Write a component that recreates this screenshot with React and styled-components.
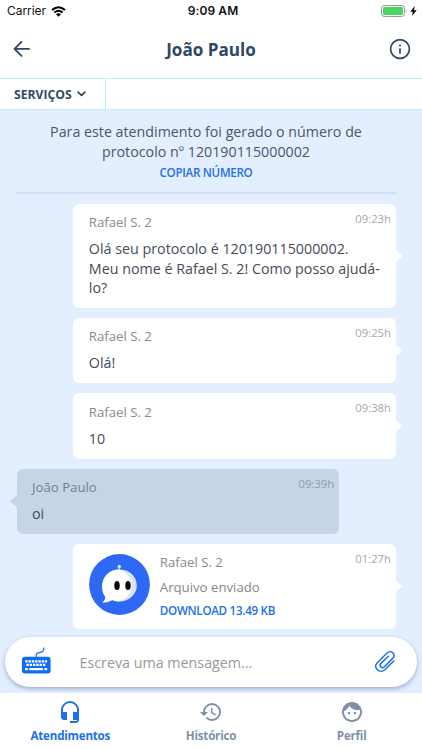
import React from "react";
import styled, { createGlobalStyle } from "styled-components";
import { MdHeadsetMic, MdHistory, MdFace } from "react-icons/md";

const GlobalStyle = createGlobalStyle`
  * { box-sizing: border-box; }
  body { margin: 0; font-family: "Open Sans", "Noto Sans", sans-serif; background: #fff; }
  button { border: 0; padding: 0; background: none; font: inherit; color: inherit; text-align: inherit; }
  svg { display: block; flex: none; }
`;

const Screen = styled.div`
  width: 422px;
  height: 750px;
  display: flex;
  flex-direction: column;
  overflow: hidden;
  background: #fff;
`;

const StatusBar = styled.div`
  height: 22px;
  display: grid;
  grid-template-columns: 1fr auto 1fr;
  align-items: center;
  padding: 0 5px 0 7px;
  font-family: Inter, sans-serif;
  font-size: 12px;
  line-height: 22px;
  color: #111;
`;

const Carrier = styled.div`
  display: flex;
  align-items: center;
  gap: 5.5px;
  letter-spacing: -0.05px;
`;

const Clock = styled.div`
  font-weight: 600;
  letter-spacing: 0.1px;
  transform: translateX(1px);
`;

const Power = styled.div`
  display: flex;
  justify-content: flex-end;
  align-items: center;
  gap: 3px;
`;

const Header = styled.header`
  height: 56px;
  display: grid;
  grid-template-columns: 40px 1fr 40px;
  align-items: center;
  padding: 0 10px;
  color: #2f4767;
`;

const Title = styled.h1`
  margin: 0;
  text-align: center;
  font-size: 17.1px;
  line-height: 24px;
  font-weight: 700;
`;

const IconButton = styled.button`
  display: flex;
  justify-content: ${(p) => (p.$end ? "flex-end" : "flex-start")};
`;

const ServiceBar = styled.div`
  height: 32px;
  flex: none;
  display: flex;
  border-top: 1px solid #c3eef8;
  border-bottom: 1px solid #c9ebf7;
`;

const ServiceMenu = styled.button`
  width: 106px;
  display: flex;
  align-items: center;
  gap: 5px;
  padding-left: 14px;
  border-right: 1px solid #b5eefa;
  color: #33486a;
  font-size: 12.2px;
  font-weight: 700;
`;

const Chat = styled.main`
  flex: 1;
  min-height: 0;
  display: flex;
  flex-direction: column;
  background: #e3efff;
`;

const Protocol = styled.section`
  margin: 0 26px 0 16px;
  height: 84px;
  padding-top: 12px;
  border-bottom: 2px solid #d0dff3;
  text-align: center;
`;

const ProtocolText = styled.p`
  margin: 0;
  font-size: 14.26px;
  line-height: 19.5px;
  color: #4b5669;
`;

const LinkButton = styled.button`
  display: block;
  font-size: 11.6px;
  letter-spacing: -0.28px;
  line-height: 16px;
  font-weight: 600;
  color: #1e70e6;
`;

const CopyButton = styled(LinkButton)`
  margin: 4px auto 0;
`;

const Messages = styled.div`
  display: flex;
  flex-direction: column;
  gap: 10px;
  padding: 10px 26px 0 16.5px;
`;

const Bubble = styled.article`
  position: relative;
  width: 322.7px;
  height: ${(p) => p.$height}px;
  align-self: ${(p) => (p.$own ? "flex-start" : "flex-end")};
  display: flex;
  gap: 10px;
  padding: 8.4px 10px 0 15.5px;
  border-radius: 6px;
  background: ${(p) => (p.$own ? "#c6d5e6" : "#fff")};

  &::after {
    content: "";
    position: absolute;
    top: 50%;
    ${(p) => (p.$own ? "left" : "right")}: -6.5px;
    width: 7px;
    height: 12px;
    transform: translateY(-50%);
    background: inherit;
    clip-path: ${(p) =>
      p.$own ? "polygon(100% 0, 0 50%, 100% 100%)" : "polygon(0 0, 100% 50%, 0 100%)"};
  }
`;

const Body = styled.div`
  flex: 1;
`;

const Sender = styled.div`
  font-size: 13.2px;
  line-height: 20px;
  color: ${(p) => (p.$own ? "#728094" : "#858a92")};
`;

const Text = styled.p`
  margin: 7px 0 0;
  font-size: 14.29px;
  line-height: 19.4px;
  color: #454b58;
  white-space: pre-line;
`;

const FileNote = styled.div`
  margin: 6px 0;
  font-size: 13.2px;
  line-height: 19px;
  color: #83878f;
`;

const Time = styled.time`
  position: absolute;
  top: 7px;
  right: 5px;
  font-size: 11.3px;
  line-height: 16px;
  color: ${(p) => (p.$own ? "#8c9bad" : "#a3a8af")};
`;

const Composer = styled.div`
  height: 50px;
  flex: none;
  margin: auto 5px 6px;
  display: flex;
  align-items: center;
  padding: 0 21px 0 16px;
  border-radius: 25px;
  background: #fff;
  box-shadow: 0 2px 4px rgba(91, 107, 150, 0.5);
  color: #1c6fea;
`;

const Placeholder = styled.span`
  flex: 1;
  margin-left: 28.5px;
  font-size: 14.29px;
  color: #999;
`;

const TabBar = styled.nav`
  height: 57px;
  flex: none;
  display: grid;
  grid-template-columns: repeat(3, 1fr);
  background: #fff;
`;

const Tab = styled.button`
  display: flex;
  flex-direction: column;
  align-items: center;
  padding-top: 7px;
  gap: 4px;
  font-size: 11.6px;
  letter-spacing: -0.22px;
  line-height: 16px;
  font-weight: 700;
  color: ${(p) => (p.$active ? "#1d70e8" : "#8090a6")};
`;

const WifiIcon = () => (
  <svg width="15" height="11" viewBox="0 0 15 11" fill="none" stroke="#000" strokeWidth="2">
    <path d="M1 4.1Q7.5 -1.6 14 4.1M3.3 6.6Q7.5 2.9 11.7 6.6" />
    <path d="M7.5 10.7 5 8.2Q7.5 6.2 10 8.2Z" fill="#000" stroke="none" />
  </svg>
);

const BatteryIcon = () => (
  <svg width="26" height="12" viewBox="0 0 26 12">
    <rect x=".5" y=".5" width="23" height="11" rx="2.8" fill="#fff" stroke="#9b9b9b" />
    <rect x="2" y="2" width="20" height="8" rx="1.5" fill="#4bd663" />
    <path d="M24.8 4q1.4 2 0 4Z" fill="#9b9b9b" />
  </svg>
);

const BoltIcon = () => (
  <svg width="7" height="10" viewBox="0 0 7 10">
    <path d="M4.7 0 .3 5.7h2.6L1.9 10 6.7 4.2H4Z" fill="#000" />
  </svg>
);

const BackIcon = () => (
  <svg width="24" height="24" viewBox="0 0 24 24" fill="none" stroke="currentColor" strokeWidth="1.9" strokeLinecap="round" strokeLinejoin="round">
    <path d="M19 10.9H4.7M11.5 3.9 4.5 10.9l7 7" />
  </svg>
);

const InfoIcon = () => (
  <svg width="24" height="24" viewBox="0 0 24 24" fill="none" stroke="currentColor" strokeWidth="1.7">
    <circle cx="12" cy="11" r="9.4" />
    <path d="M12 10.3v5.4M12 6.6v1.9" />
  </svg>
);

const ChevronIcon = () => (
  <svg width="9" height="6" viewBox="0 0 9 6" fill="none" stroke="#27364d" strokeWidth="1.6" strokeLinecap="round" strokeLinejoin="round">
    <path d="m1 1 3.5 3.5L8 1" />
  </svg>
);

const KeyboardIcon = () => (
  <svg width="30" height="32" viewBox="0 0 30 32">
    <path d="M15.2 11.5V9.2c0-2 1.2-2.5 3.3-2.6 3.2-.2 4.5-1.5 4.5-5" fill="none" stroke="#1c6fea" strokeWidth="1.2" />
    <rect x=".9" y="10.8" width="28.7" height="16.6" rx="3.2" fill="#0f6cf2" />
    <path d="M4.2 15.3h21.8M5.4 18.9h19.4" stroke="#fff" strokeWidth="2.2" strokeDasharray="2.4 .9" />
    <path d="M4 23.2h2.7M8.2 23.2h13.7M23.4 23.2h2.7" stroke="#fff" strokeWidth="2.3" />
  </svg>
);

const ClipIcon = () => (
  <svg width="22" height="24" viewBox="0 0 22 24" fill="none" stroke="#1c6fea" strokeWidth="1.5" strokeLinecap="round" strokeLinejoin="round">
    <path d="M19.8 11 10.8 19.7C8.7 21.6 5.5 21.9 3.4 19.8S1.2 14.8 3.3 12.7L12.8 3.2C14.6 1.4 17.3 1.4 18.9 3S20.4 6.7 18.7 8.4L10.4 16.7C9.3 17.8 7.7 17.8 6.8 16.9S5.9 14.5 7 13.4L14.3 6.3" />
  </svg>
);

const BotAvatar = () => (
  <svg width="61" height="61" viewBox="0 0 61 61">
    <circle cx="30.5" cy="30.5" r="30.4" fill="#2e69f5" />
    <path d="M30.3 12v5" stroke="#dfe8fb" strokeWidth="1" />
    <circle cx="30.3" cy="12.5" r="1.7" fill="#e3ebfc" />
    <ellipse cx="30.5" cy="31.4" rx="17.3" ry="16" fill="#d9e3fa" />
    <path
      d="M30.5 15.4C37 17.5 42.5 24 42.5 31.5 42.5 39.5 37 45.5 29.5 47.4 27.3 47.4 25.2 46.9 23.3 46c-3 2.2-6.7 3-10.1 2.2 2-1.3 3.1-3.2 3-5.3-1.9-2.6-3.1-6-3.1-9.9C13.1 23 20.5 15.3 30.5 15.4Z"
      fill="#fff"
    />
    <ellipse cx="28" cy="31.5" rx="2.7" ry="4.5" fill="#050505" />
    <ellipse cx="39" cy="31.5" rx="2.7" ry="4.5" fill="#050505" />
  </svg>
);

const Attachment = styled.div`
  padding-top: 1.4px;
`;

const messages = [
  {
    sender: "Rafael S. 2",
    time: "09:23h",
    height: 104,
    text: "Olá seu protocolo é 120190115000002.\nMeu nome é Rafael S. 2! Como posso ajudá-\nlo?",
  },
  { sender: "Rafael S. 2", time: "09:25h", height: 65.2, text: "Olá!" },
  { sender: "Rafael S. 2", time: "09:38h", height: 65.4, text: "10" },
  { sender: "João Paulo", time: "09:39h", height: 65.2, text: "oi", own: true },
  { sender: "Rafael S. 2", time: "01:27h", height: 85.5, file: "13.49 KB" },
];

const tabs = [
  { label: "Atendimentos", Icon: MdHeadsetMic, active: true },
  { label: "Histórico", Icon: MdHistory },
  { label: "Perfil", Icon: MdFace },
];

const Message = ({ sender, time, height, text, own, file }) => (
  <Bubble $own={own} $height={height}>
    {file && (
      <Attachment>
        <BotAvatar />
      </Attachment>
    )}
    <Body>
      <Sender $own={own}>{sender}</Sender>
      {text && <Text>{text}</Text>}
      {file && (
        <>
          <FileNote>Arquivo enviado</FileNote>
          <LinkButton>DOWNLOAD {file}</LinkButton>
        </>
      )}
    </Body>
    <Time $own={own}>{time}</Time>
  </Bubble>
);

export default function App() {
  return (
    <Screen>
      <GlobalStyle />
      <StatusBar>
        <Carrier>
          Carrier <WifiIcon />
        </Carrier>
        <Clock>9:09 AM</Clock>
        <Power>
          <BatteryIcon />
          <BoltIcon />
        </Power>
      </StatusBar>
      <Header>
        <IconButton aria-label="Voltar">
          <BackIcon />
        </IconButton>
        <Title>João Paulo</Title>
        <IconButton $end aria-label="Informações">
          <InfoIcon />
        </IconButton>
      </Header>
      <ServiceBar>
        <ServiceMenu>
          SERVIÇOS <ChevronIcon />
        </ServiceMenu>
      </ServiceBar>
      <Chat>
        <Protocol>
          <ProtocolText>
            Para este atendimento foi gerado o número de
            <br />
            protocolo nº 120190115000002
          </ProtocolText>
          <CopyButton>COPIAR NÚMERO</CopyButton>
        </Protocol>
        <Messages>
          {messages.map((m) => (
            <Message key={m.time} {...m} />
          ))}
        </Messages>
        <Composer>
          <KeyboardIcon />
          <Placeholder>Escreva uma mensagem...</Placeholder>
          <ClipIcon />
        </Composer>
      </Chat>
      <TabBar>
        {tabs.map(({ label, Icon, active }) => (
          <Tab key={label} $active={active}>
            <Icon size={24} />
            {label}
          </Tab>
        ))}
      </TabBar>
    </Screen>
  );
}
